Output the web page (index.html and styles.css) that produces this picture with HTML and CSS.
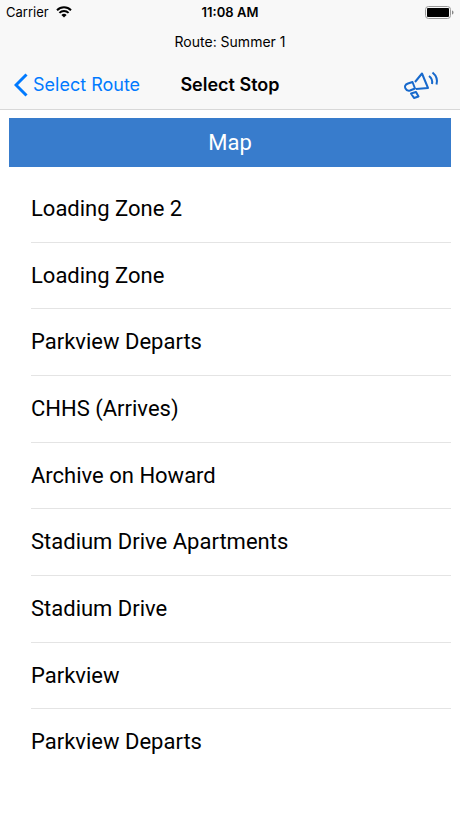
FILE: index.html
```
<!DOCTYPE html>
<html lang="en">
<head>
    <meta charset="UTF-8">
    <meta name="viewport" content="width=device-width, initial-scale=1.0">
    <title>Select Stop</title>
    <link rel="stylesheet" href="styles.css">
</head>
<body>
    <header class="header">
        <!-- Status bar -->
        <div class="status-bar">
            <div class="carrier">
                <span>Carrier</span>
                <svg class="wifi" viewBox="0 0 16 12" aria-hidden="true">
                    <path d="M1 4.200a10 10 0 0 1 14 0M3.400 6.900a6.600 6.600 0 0 1 9.200 0" fill="none" stroke="#000" stroke-width="2"/>
                    <path d="M8 11.600 5.400 9a3.700 3.700 0 0 1 5.200 0z"/>
                </svg>
            </div>
            <span class="time">11:08 AM</span>
            <svg class="battery" viewBox="0 0 29 13" aria-hidden="true">
                <rect x="0.5" y="0.5" width="25" height="12" rx="3" fill="none" stroke="#999"/>
                <rect x="2" y="2" width="22" height="9" rx="1"/>
                <path d="M27 4.500c2 .6 2 3.400 0 4z" fill="#888"/>
            </svg>
        </div>

        <div class="route">Route: Summer 1</div>

        <!-- Navigation -->
        <nav class="nav-bar">
            <a class="back" href="#">
                <svg class="chevron" viewBox="0 0 14 24" aria-hidden="true">
                    <path d="M12.500 1.500 2 12l10.500 10.500" fill="none" stroke="#007aff" stroke-width="3"/>
                </svg>
                Select Route
            </a>
            <h1 class="title">Select Stop</h1>
            <button class="announce" type="button" aria-label="Announcements">
                <svg class="megaphone" viewBox="0 0 36 32" aria-hidden="true">
                    <g fill="none" stroke="#1769cc" stroke-width="2" stroke-linejoin="round">
                        <path d="M11 13 18 4.500l6 14.500-12 1"/>
                        <path d="M8.500 13 4 14.500c-3 1-3.500 3-2.500 5s2.500 2.500 4.500 2l5-2z"/>
                        <path d="M7 24.500 12 23l2.500 4.500-4.500 1.500z"/>
                        <path d="M25 7q4 3 3 8M28.500 3.500q6 5 4 12"/>
                    </g>
                </svg>
            </button>
        </nav>
    </header>

    <main class="content">
        <button class="map-button" type="button">Map</button>
        <ul class="stops">
            <li><a href="#">Loading Zone 2</a></li>
            <li><a href="#">Loading Zone</a></li>
            <li><a href="#">Parkview Departs</a></li>
            <li><a href="#">CHHS (Arrives)</a></li>
            <li><a href="#">Archive on Howard</a></li>
            <li><a href="#">Stadium Drive Apartments</a></li>
            <li><a href="#">Stadium Drive</a></li>
            <li><a href="#">Parkview</a></li>
            <li><a href="#">Parkview Departs</a></li>
        </ul>
    </main>
</body>
</html>
```

FILE: styles.css
```
body {
    margin: 0;
    font-family: Inter, "Liberation Sans", sans-serif;
    background: #fff;
    color: #000;
}

.header {
    background: #f8f8f8;
    border-bottom: 1px solid #d8d8d8;
}

.status-bar {
    display: grid;
    grid-template-columns: 1fr auto 1fr;
    align-items: center;
    height: 24px;
    padding: 0 6px;
    font-size: 13px;
}

.carrier {
    display: flex;
    align-items: center;
    gap: 7px;
}

.wifi {
    width: 16px;
    height: 12px;
}

.time {
    font-weight: 600;
}

.battery {
    justify-self: end;
    width: 29px;
    height: 13px;
}

.route {
    height: 36px;
    line-height: 36px;
    text-align: center;
    font-size: 14px;
}

.nav-bar {
    display: grid;
    grid-template-columns: 1fr auto 1fr;
    align-items: center;
    height: 49px;
    padding: 0 14px;
}

.back {
    display: flex;
    align-items: center;
    gap: 5px;
    font-size: 18px;
    color: #007aff;
    text-decoration: none;
}

.chevron {
    width: 14px;
    height: 24px;
}

.title {
    margin: 0;
    font-size: 18px;
    font-weight: 600;
}

.announce {
    justify-self: end;
    margin-right: 6px;
    padding: 0;
    border: none;
    background: none;
}

.megaphone {
    display: block;
    width: 36px;
    height: 32px;
}

.content {
    padding: 8px 9px;
}

.map-button {
    display: block;
    width: 100%;
    height: 49px;
    border: none;
    background: #387ccc;
    color: #fff;
    font-family: Roboto, "Liberation Sans", sans-serif;
    font-size: 22px;
}

.stops {
    display: grid;
    grid-auto-rows: 1fr;
    min-height: 600px;
    margin: 9px 0 0 22px;
    padding: 0;
    list-style: none;
    font-family: Roboto, "Liberation Sans", sans-serif;
    font-size: 22px;
}

.stops li {
    border-bottom: 1px solid #e4e4e4;
}

.stops li:last-child {
    border-bottom: none;
}

.stops a {
    display: block;
    line-height: 65px;
    color: #000;
    text-decoration: none;
}
```
